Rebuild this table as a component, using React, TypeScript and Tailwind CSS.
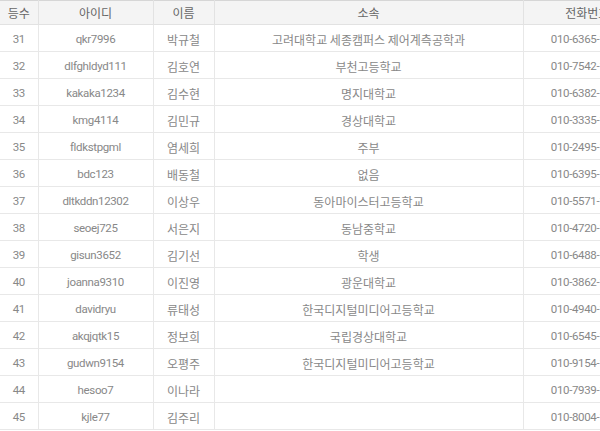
const rows: [string, string, string, string, string][] = [
  ['31', 'qkr7996', '박규철', '고려대학교 세종캠퍼스 제어계측공학과', '010-6365-1234'],
  ['32', 'dlfghldyd111', '김호연', '부천고등학교', '010-7542-1234'],
  ['33', 'kakaka1234', '김수현', '명지대학교', '010-6382-1234'],
  ['34', 'kmg4114', '김민규', '경상대학교', '010-3335-1234'],
  ['35', 'fldkstpgml', '염세희', '주부', '010-2495-1234'],
  ['36', 'bdc123', '배동철', '없음', '010-6395-1234'],
  ['37', 'dltkddn12302', '이상우', '동아마이스터고등학교', '010-5571-1234'],
  ['38', 'seoej725', '서은지', '동남중학교', '010-4720-1234'],
  ['39', 'gisun3652', '김기선', '학생', '010-6488-1234'],
  ['40', 'joanna9310', '이진영', '광운대학교', '010-3862-1234'],
  ['41', 'davidryu', '류태성', '한국디지털미디어고등학교', '010-4940-1234'],
  ['42', 'akqjqtk15', '정보희', '국립경상대학교', '010-6545-1234'],
  ['43', 'gudwn9154', '오평주', '한국디지털미디어고등학교', '010-9154-1234'],
  ['44', 'hesoo7', '이나라', '', '010-7939-1234'],
  ['45', 'kjle77', '김주리', '', '010-8004-1234'],
]

const heads = ['등수', '아이디', '이름', '소속', '전화번호']
const widths = ['w-[38px]', 'w-[115px]', 'w-[61px]', 'w-[309px]', 'w-[128px]']
// latin-only columns get a narrower face
const latin = [true, true, false, false, true]

export default function App() {
  return (
    <div className="w-[600px] h-[431px] overflow-hidden bg-white font-['Noto_Sans_CJK_KR',sans-serif] text-[12px]">
      <table className="w-[651px] table-fixed border-collapse border-t border-[#d6d6d6]">
        <colgroup>
          {widths.map((w, i) => (
            <col key={i} className={w} />
          ))}
        </colgroup>
        <thead>
          <tr className="h-[24px] bg-[#f4f4f4]">
            {heads.map((h, i) => (
              <th
                key={h}
                className={`font-normal text-[#666] text-center border-b border-[#e2e2e2] p-0 pt-[1px] ${i > 0 ? 'border-l' : ''}`}
              >
                {h}
              </th>
            ))}
          </tr>
        </thead>
        <tbody>
          {rows.map((r) => (
            <tr key={r[0]} className="h-[27px]">
              {r.map((c, i) => (
                <td
                  key={i}
                  className={`text-center text-[#888] border-b border-[#e8e8e8] p-0 whitespace-nowrap overflow-hidden ${i > 0 ? 'border-l' : ''} ${latin[i] ? "font-['Roboto',sans-serif] text-[11.5px] tracking-[-0.35px] pt-[4px]" : 'pt-[3px]'}`}
                >
                  {c}
                </td>
              ))}
            </tr>
          ))}
        </tbody>
      </table>
    </div>
  )
}
